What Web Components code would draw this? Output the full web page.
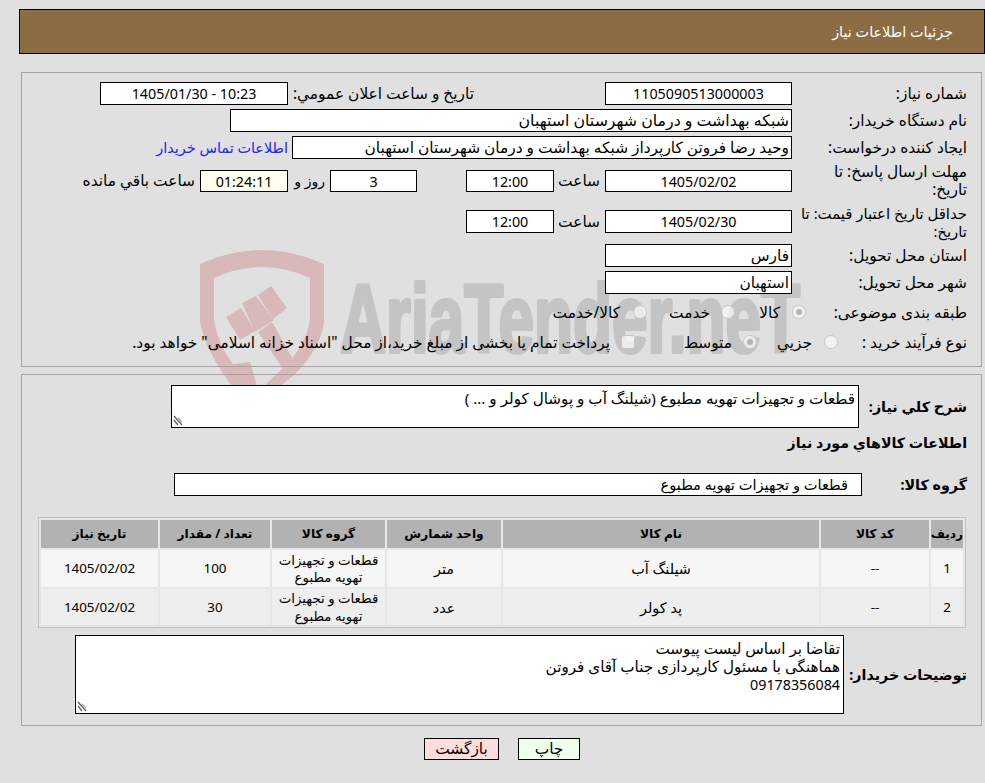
<!DOCTYPE html>
<html lang="fa" dir="rtl">
<head>
<meta charset="utf-8">
<title>جزئیات اطلاعات نیاز</title>
<style>
  html { background: #e0e0e0; }
  body { margin: 0; padding: 0; font: 15.4px/18px "Noto Sans", "DejaVu Sans", sans-serif; color: #000; overflow: hidden; }
</style>
</head>
<body>
<water-mark></water-mark>
<page-header>جزئیات اطلاعات نیاز</page-header>

<form-panel style="margin-top:18px;padding-top:9px;padding-bottom:12px">
  <form-row label="شماره نیاز:" height="23">
    <read-field width="187" center>1105090513000003</read-field>
    <row-text width="186" style="margin-right:131px">تاریخ و ساعت اعلان عمومي:</row-text>
    <read-field width="188" center>10:23 - 1405/01/30</read-field>
  </form-row>
  <form-row label="نام دستگاه خریدار:" height="23">
    <read-field width="562" style="font-size:15.8px">شبکه بهداشت و درمان شهرستان استهبان</read-field>
  </form-row>
  <form-row label="ایجاد کننده درخواست:" height="23">
    <read-field width="500">وحید رضا فروتن کارپرداز شبکه بهداشت و درمان شهرستان استهبان</read-field>
    <row-text style="margin-right:4px;color:#2222ff;font-size:14.4px">اطلاعات تماس خریدار</row-text>
  </form-row>
  <form-row label="مهلت ارسال پاسخ: تا&lt;br&gt;تاریخ:" height="36">
    <read-field width="187" height="22" center>1405/02/02</read-field>
    <row-text width="46" style="margin-right:5px">ساعت</row-text>
    <read-field width="88" height="22" center>12:00</read-field>
    <read-field width="87" height="22" center style="margin-right:49px">3</read-field>
    <row-text width="37" style="margin-right:5px;font-size:14px">روز و</row-text>
    <read-field width="88" height="22" center fill="#ffffee">01:24:11</read-field>
    <row-text style="margin-right:5px">ساعت باقي مانده</row-text>
  </form-row>
  <form-row label="حداقل تاریخ اعتبار قیمت: تا&lt;br&gt;تاریخ:" height="37" label-size="14.9">
    <read-field width="187" center>1405/02/30</read-field>
    <row-text width="46" style="margin-right:5px">ساعت</row-text>
    <read-field width="88" center>12:00</read-field>
  </form-row>
  <form-row label="استان محل تحویل:" height="23">
    <read-field width="187">فارس</read-field>
  </form-row>
  <form-row label="شهر محل تحویل:" height="23">
    <read-field width="187">استهبان</read-field>
  </form-row>
  <form-row label="طبقه بندی موضوعی:" height="30" label-width="161">
    <choice-mark checked></choice-mark>
    <row-text width="20" style="margin-right:12px">کالا</row-text>
    <choice-mark style="margin-right:25px"></choice-mark>
    <row-text width="40" style="margin-right:11px">خدمت</row-text>
    <choice-mark style="margin-right:23px"></choice-mark>
    <row-text style="margin-right:13px">کالا/خدمت</row-text>
  </form-row>
  <form-row label="نوع فرآیند خرید :" height="22" label-width="129">
    <choice-mark></choice-mark>
    <row-text width="35" style="margin-right:12px">جزیي</row-text>
    <choice-mark checked style="margin-right:20px"></choice-mark>
    <row-text width="45" style="margin-right:11px">متوسط</row-text>
    <choice-mark square style="margin-right:52px"></choice-mark>
    <row-text style="margin-right:11px">پرداخت تمام یا بخشی از مبلغ خرید،از محل "اسناد خزانه اسلامی" خواهد بود.</row-text>
  </form-row>
</form-panel>

<form-panel style="margin-top:7px;padding-top:10px;padding-bottom:11px">
  <form-row label="شرح كلي نياز:" height="43" label-width="108" strong>
    <note-box width="688" height="43">قطعات و تجهیزات تهویه مطبوع (شیلنگ آب و پوشال کولر و ... )</note-box>
  </form-row>
  <section-title>اطلاعات کالاهاي مورد نياز</section-title>
  <form-row label="گروه کالا:" height="23" label-width="105" strong>
    <read-field width="688" pad="13" style="font-size:14.6px">قطعات و تجهیزات تهویه مطبوع</read-field>
  </form-row>
  <need-table style="margin-top:17px"></need-table>
  <form-row label="توضیحات خریدار:" height="79" label-width="123" strong style="margin-top:3px">
    <note-box width="769" height="79">تقاضا بر اساس لیست پیوست<br>هماهنگی با مسئول کارپردازی جناب آقای فروتن<br><span style="font-size:14.3px">09178356084</span></note-box>
  </form-row>
</form-panel>

<action-bar>
  <action-button width="62" fill="#eeffee">چاپ</action-button>
  <action-button width="75" fill="#ffdddd">بازگشت</action-button>
</action-bar>

<script>
class WaterMark extends HTMLElement {
  constructor() {
    super();
    this.attachShadow({ mode: "open" });
    this.shadowRoot.innerHTML = `
      <style>
        :host { position: absolute; top: 0; left: 0; width: 985px; height: 783px; z-index: -1; pointer-events: none; }
        svg { display: block; }
      </style>
      <svg width="985" height="783" viewBox="0 0 985 783">
        <g fill="#d8b8b9">
          <path fill-rule="evenodd" d="M200 264 Q262 236 324 264 L324 322 Q320 350 293 376 L262 400 L232 386 Q205 350 200 322 Z
            M214 278 L214 320 Q218 345 233 364 L250 362 L257 386 L262 388 L285 366 Q306 345 310 320 L310 278 Q262 256 214 278 Z"/>
          <path d="M226 317 L241 308 L255 331 L240 340 Z"/>
          <path d="M242 303 L256 296 L274 320 L255 332 Z"/>
          <path d="M258 295 L271 286 L287 308 L273 319 Z"/>
          <path d="M258 332 L272 322 L298 368 L288 376 Z"/>
        </g>
        <text x="340" y="352" direction="ltr" textLength="460" lengthAdjust="spacingAndGlyphs"
          font-family="Liberation Sans" font-weight="700" font-size="96"
          fill="#c4c4c4" stroke="#c4c4c4" stroke-width="4" stroke-linejoin="round">AriaTender.neT</text>
      </svg>
    `;
  }
}

class PageHeader extends HTMLElement {
  constructor() {
    super();
    this.attachShadow({ mode: "open" });
    this.shadowRoot.innerHTML = `
      <style>
        :host {
          display: flex; align-items: center; box-sizing: border-box;
          margin: 9px 0 0 0; width: 966px; height: 45px; padding: 0 31px 0 0;
          font-size: 14.4px; background: #8c6c42; border: 1px solid #000; color: #fff;
        }
      </style>
      <slot></slot>
    `;
  }
}

class FormPanel extends HTMLElement {
  constructor() {
    super();
    this.attachShadow({ mode: "open" });
    this.shadowRoot.innerHTML = `
      <style>
        :host {
          display: flex; flex-direction: column; gap: 4px; box-sizing: border-box;
          margin-right: 3px; width: 961px; padding-right: 14px;
          border: 1px solid #a3a3a3;
        }
      </style>
      <slot></slot>
    `;
  }
}

class FormRow extends HTMLElement {
  constructor() {
    super();
    this.attachShadow({ mode: "open" });
    const width = this.getAttribute("label-width") || 175;
    const height = this.getAttribute("height") || 23;
    const strong = this.hasAttribute("strong");
    const size = this.getAttribute("label-size") || (strong ? 14.3 : 15.4);
    this.shadowRoot.innerHTML = `
      <style>
        :host { display: flex; align-items: center; height: ${height}px; }
        .label {
          flex: none; box-sizing: border-box; width: ${width}px; white-space: nowrap;
          font-weight: ${strong ? 700 : 400}; font-size: ${size}px;
        }
        .body { display: flex; align-items: center; }
      </style>
      <div class="label">${this.getAttribute("label")}</div>
      <div class="body"><slot></slot></div>
    `;
  }
}

class ReadField extends HTMLElement {
  constructor() {
    super();
    this.attachShadow({ mode: "open" });
    const center = this.hasAttribute("center");
    this.shadowRoot.innerHTML = `
      <style>
        :host {
          display: block; flex: none; box-sizing: border-box; overflow: hidden; white-space: nowrap;
          width: ${this.getAttribute("width")}px; height: ${this.getAttribute("height") || 23}px;
          padding: 1px ${this.getAttribute("pad") || 2}px 0 2px; line-height: 19px;
          text-align: ${center ? "center" : "right"}; ${center ? "font-size: 14.3px;" : ""}
          background: ${this.getAttribute("fill") || "#fff"}; border: 1px solid #000;
        }
      </style>
      <slot></slot>
    `;
  }
}

class RowText extends HTMLElement {
  constructor() {
    super();
    this.attachShadow({ mode: "open" });
    const width = this.getAttribute("width");
    this.shadowRoot.innerHTML = `
      <style>
        :host { display: block; flex: none; white-space: nowrap; ${width ? `width: ${width}px;` : ""} }
      </style>
      <slot></slot>
    `;
  }
}

class ChoiceMark extends HTMLElement {
  constructor() {
    super();
    this.attachShadow({ mode: "open" });
    const radius = this.hasAttribute("square") ? "3px" : "50%";
    const dot = this.hasAttribute("checked") ? "#b4b4b4" : "transparent";
    this.shadowRoot.innerHTML = `
      <style>
        :host {
          display: flex; flex: none; align-items: center; justify-content: center; box-sizing: border-box;
          width: 14px; height: 14px; border-radius: ${radius}; margin-top: -3px;
          background: rgba(248,248,248,.75); border: 1px solid #c6c6c6;
        }
        i { width: 6px; height: 6px; border-radius: 50%; background: ${dot}; }
      </style>
      <i></i>
    `;
  }
}

class NoteBox extends HTMLElement {
  constructor() {
    super();
    this.attachShadow({ mode: "open" });
    this.shadowRoot.innerHTML = `
      <style>
        :host {
          display: block; position: relative; flex: none; box-sizing: border-box;
          width: ${this.getAttribute("width")}px; height: ${this.getAttribute("height")}px;
          padding: 3px 3px; font-size: 15.2px; background: #fff; border: 1px solid #000;
        }
        svg { position: absolute; left: 1px; bottom: 1px; }
      </style>
      <slot></slot>
      <svg width="11" height="11" viewBox="0 0 11 11" stroke="#666" stroke-width="1.4" fill="none">
        <path d="M1 1 L9 10"/>
        <path d="M1 5 L5 10"/>
        <path d="M5 3 L9 7" stroke="#aaa"/>
      </svg>
    `;
  }
}

class SectionTitle extends HTMLElement {
  constructor() {
    super();
    this.attachShadow({ mode: "open" });
    this.shadowRoot.innerHTML = `
      <style>
        :host { display: block; height: 18px; margin: 2px 0 17px; font-size: 14.2px; font-weight: 700; }
      </style>
      <slot></slot>
    `;
  }
}

class NeedTable extends HTMLElement {
  constructor() {
    super();
    this.attachShadow({ mode: "open" });
    const group = "قطعات و تجهیزات<br>تهویه مطبوع";
    const rows = [
      ["1", "--", "شیلنگ آب", "متر", group, "100", "1405/02/02"],
      ["2", "--", "پد کولر", "عدد", group, "30", "1405/02/02"]
    ];
    const heads = ["ردیف", "کد کالا", "نام کالا", "واحد شمارش", "گروه کالا", "تعداد / مقدار", "تاریخ نیاز"];
    const widths = [32, 108, 316, 114, 113, 110, 117];
    const kinds = ["num", "num", "", "", "group", "num", "num"];
    this.shadowRoot.innerHTML = `
      <style>
        :host { display: block; margin-right: 1px; width: 928px; }
        table {
          width: 928px; box-sizing: border-box; table-layout: fixed; border-collapse: separate; border-spacing: 2px;
          background: #e6e6e6; border: 1px solid #c2c2c2;
        }
        th { height: 28px; padding: 0; background: #b2b2b2; font-size: 12.2px; font-weight: 700; }
        td {
          box-sizing: border-box; padding: 1px 0 0; text-align: center; line-height: 17.5px;
          font-size: 14.4px; white-space: nowrap;
        }
        td.num { font-size: 13.4px; }
        td.group { font-size: 13.3px; }
        tr.one td { height: 37px; background: #f6f6f6; }
        tr.two td { height: 36px; background: #eeeeee; }
      </style>
      <table>
        <colgroup>${widths.map(w => `<col style="width:${w}px">`).join("")}</colgroup>
        <tr>${heads.map(h => `<th>${h}</th>`).join("")}</tr>
        ${rows.map((r, i) => `<tr class="${i ? "two" : "one"}">${r.map((c, k) => `<td class="${kinds[k]}">${c}</td>`).join("")}</tr>`).join("")}
      </table>
    `;
  }
}

class ActionBar extends HTMLElement {
  constructor() {
    super();
    this.attachShadow({ mode: "open" });
    this.shadowRoot.innerHTML = `
      <style>
        :host { display: flex; gap: 19px; margin: 12px 405px 0 0; }
      </style>
      <slot></slot>
    `;
  }
}

class ActionButton extends HTMLElement {
  constructor() {
    super();
    this.attachShadow({ mode: "open" });
    this.shadowRoot.innerHTML = `
      <style>
        :host {
          display: flex; align-items: center; justify-content: center; box-sizing: border-box;
          width: ${this.getAttribute("width")}px; height: 22px;
          background: ${this.getAttribute("fill")}; border: 1px solid #000;
        }
      </style>
      <slot></slot>
    `;
  }
}

customElements.define("water-mark", WaterMark);
customElements.define("page-header", PageHeader);
customElements.define("form-panel", FormPanel);
customElements.define("form-row", FormRow);
customElements.define("read-field", ReadField);
customElements.define("row-text", RowText);
customElements.define("choice-mark", ChoiceMark);
customElements.define("note-box", NoteBox);
customElements.define("section-title", SectionTitle);
customElements.define("need-table", NeedTable);
customElements.define("action-bar", ActionBar);
customElements.define("action-button", ActionButton);
</script>
</body>
</html>
